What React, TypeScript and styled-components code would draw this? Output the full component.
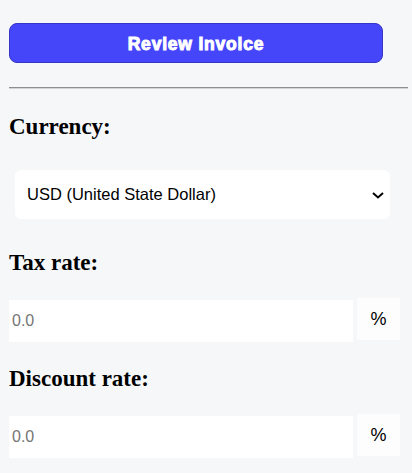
import styled, { createGlobalStyle } from "styled-components";

const GlobalStyle = createGlobalStyle`
  html, body {
    margin: 0;
    padding: 0;
    background-color: #f6f7f9;
  }
`;

const Page = styled.div`
  display: flex;
  flex-direction: column;
  align-items: flex-start;
  padding: 23px 4px 20px 9px;
  width: 412px;
  box-sizing: border-box;
`;

const ReviewButton = styled.button`
  width: 374px;
  height: 40px;
  padding: 2px 0 0 0;
  background-color: #4545fa;
  border: 1px solid #3535c8;
  border-radius: 8px;
  color: #ffffff;
  font-family: "Liberation Sans", Arial, sans-serif;
  font-weight: 900;
  font-size: 17.5px;
  letter-spacing: 0.8px;
  -webkit-text-stroke: 1px #ffffff;
  cursor: pointer;
`;

const Divider = styled.hr`
  width: 399px;
  margin: 24px 0 0 0;
  border: none;
  border-top: 1px solid #8e8e8e;
  border-bottom: 1px solid #d4d4d4;
`;

const Heading = styled.h2<{ $gap: number }>`
  margin: ${(p) => p.$gap}px 0 0 0;
  font-family: "Liberation Serif", "Times New Roman", serif;
  font-weight: bold;
  font-size: 23px;
  line-height: 26px;
  color: #000000;
`;

const SelectWrap = styled.div`
  position: relative;
  margin: 29.5px 0 0 6px;
  width: 375px;
  height: 49px;
`;

const Select = styled.select`
  appearance: none;
  width: 100%;
  height: 100%;
  border: none;
  border-radius: 6px;
  background-color: #ffffff;
  padding: 0 30px 0 12px;
  font-family: "Liberation Sans", Arial, sans-serif;
  font-size: 16.5px;
  color: #000000;
  outline: none;
`;

const Chevron = styled.svg`
  position: absolute;
  right: 6px;
  top: 22px;
  pointer-events: none;
`;

const RateRow = styled.div<{ $gap: number }>`
  display: flex;
  align-items: flex-start;
  gap: 4px;
  margin-top: ${(p) => p.$gap}px;
`;

const RateInput = styled.input`
  width: 344px;
  height: 42px;
  margin-top: 2px;
  box-sizing: border-box;
  border: none;
  background-color: #ffffff;
  padding: 0 0 0 3px;
  font-family: "Liberation Sans", Arial, sans-serif;
  font-size: 16px;
  color: #000000;
  outline: none;

  &::placeholder {
    color: #757575;
  }
`;

const Unit = styled.span`
  display: flex;
  align-items: center;
  justify-content: center;
  width: 43px;
  height: 42px;
  padding-top: 1px;
  box-sizing: border-box;
  background-color: #fdfdfd;
  font-family: "Liberation Sans", Arial, sans-serif;
  font-size: 18px;
  color: #000000;
`;

export default function App() {
  return (
    <>
      <GlobalStyle />
      <Page>
        <ReviewButton>Review Invoice</ReviewButton>
        <Divider />

        <Heading $gap={25}>Currency:</Heading>
        <SelectWrap>
          <Select defaultValue="USD">
            <option value="USD">USD (United State Dollar)</option>
            <option value="EUR">EUR (Euro)</option>
            <option value="GBP">GBP (British Pound)</option>
          </Select>
          <Chevron width="12" height="7" viewBox="0 0 12 7">
            <path
              d="M1 1 L6 5.5 L11 1"
              fill="none"
              stroke="#000000"
              strokeWidth="2"
            />
          </Chevron>
        </SelectWrap>

        <Heading $gap={31}>Tax rate:</Heading>
        <RateRow $gap={22}>
          <RateInput placeholder="0.0" />
          <Unit>%</Unit>
        </RateRow>

        <Heading $gap={24}>Discount rate:</Heading>
        <RateRow $gap={22}>
          <RateInput placeholder="0.0" />
          <Unit>%</Unit>
        </RateRow>
      </Page>
    </>
  );
}
